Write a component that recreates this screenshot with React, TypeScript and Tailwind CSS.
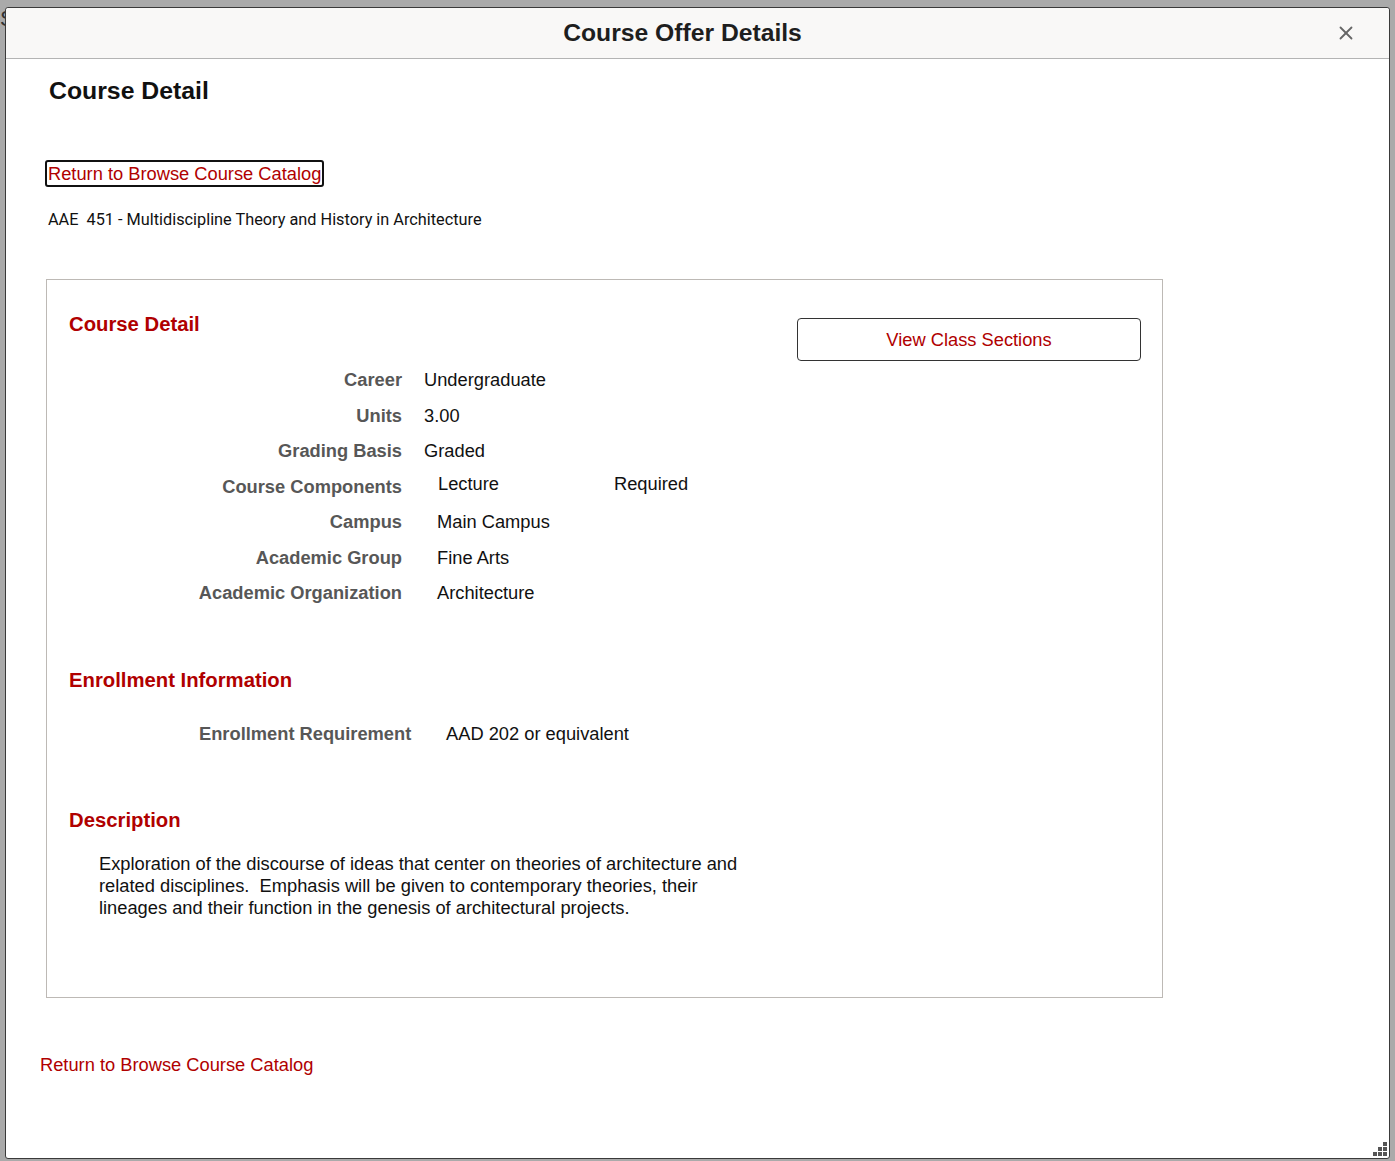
import { X } from "lucide-react"

const details = [
  { label: "Career", value: "Undergraduate" },
  { label: "Units", value: "3.00" },
  { label: "Grading Basis", value: "Graded" },
]

const details2 = [
  { label: "Campus", value: "Main Campus" },
  { label: "Academic Group", value: "Fine Arts" },
  { label: "Academic Organization", value: "Architecture" },
]

function Label({ children }: { children: React.ReactNode }) {
  return <div className="w-[356px] shrink-0 text-right font-bold text-[#575757]">{children}</div>
}

export default function App() {
  return (
    <div
      className="relative w-full h-[1161px] bg-[#aaaaaa] overflow-hidden pt-[7px] pl-[5px]"
      style={{ fontFamily: '"Liberation Sans", Arial, sans-serif' }}
    >
      <div className="absolute left-0 top-[8px] text-[22px] text-[#333] leading-none">S</div>

      <div className="relative w-[1385px] h-[1152px] bg-white border border-[#3a3a3a] rounded-[3px] flex flex-col">
        {/* header */}
        <div className="h-[51px] shrink-0 bg-[#f9f8f7] border-b border-[#b4b4b4] rounded-t-[3px] flex items-center justify-center pr-[30px] relative">
          <h1 className="text-[24.7px] font-bold text-[#1e1e1e]">Course Offer Details</h1>
          <button className="absolute right-[32px] top-[14px] text-[#666]">
            <X className="w-[22px] h-[22px]" strokeWidth={2} />
          </button>
        </div>

        <div className="flex-1 flex flex-col text-[18.3px]">
          <h2 className="pl-[43px] pt-[18px] text-[24.8px] font-bold text-[#111] leading-[28px]">Course Detail</h2>

          <div className="pl-[39px] pt-[55px]">
            <a className="inline-block text-[18.3px] text-[#b00000] leading-[21px] px-[1px] py-[1px] border-2 border-[#111] rounded-[3px]">
              Return to Browse Course Catalog
            </a>
          </div>

          <div className="pl-[42px] pt-[23px] text-[16.3px] text-[#111] leading-[20px]" style={{ fontFamily: "Roboto, Arial, sans-serif" }}>
            AAE&nbsp;&nbsp;451 - Multidiscipline Theory and History in Architecture
          </div>

          {/* main box */}
          <div className="ml-[40px] mt-[49px] w-[1117px] h-[719px] border border-[#bdb9b5] pl-[22px] pr-[21px] pt-[32px] text-[#111]">
            <div className="flex justify-between">
              <div className="flex-1">
                <h3 className="text-[20.3px] font-bold text-[#b00000] leading-[24px]">Course Detail</h3>

                <div className="mt-[26px] ml-[-23px] flex flex-col">
                  {details.map((d) => (
                    <div key={d.label} className="flex h-[35.5px] items-center">
                      <Label>{d.label}</Label>
                      <div className="pl-[22px]">{d.value}</div>
                    </div>
                  ))}
                  <div className="flex h-[35.5px] items-center">
                    <Label>Course Components</Label>
                    <div className="pl-[36px] w-[212px] -mt-[6px]">Lecture</div>
                    <div className="-mt-[6px]">Required</div>
                  </div>
                  {details2.map((d) => (
                    <div key={d.label} className="flex h-[35.5px] items-center">
                      <Label>{d.label}</Label>
                      <div className="pl-[35px]">{d.value}</div>
                    </div>
                  ))}
                </div>
              </div>

              <button className="mt-[6px] w-[344px] h-[43px] border border-[#333] rounded-[4px] text-[18.3px] text-[#b00000] shrink-0 pb-[1px]">
                View Class Sections
              </button>
            </div>

            <h3 className="mt-[57px] text-[20.3px] font-bold text-[#b00000] leading-[24px]">Enrollment Information</h3>
            <div className="mt-[28px] flex items-center">
              <div className="pl-[130px] w-[377px] font-bold text-[#575757]">Enrollment Requirement</div>
              <div>AAD 202 or equivalent</div>
            </div>

            <h3 className="mt-[61px] text-[20.3px] font-bold text-[#b00000] leading-[24px]">Description</h3>
            <p className="mt-[21px] pl-[30px] w-[690px] leading-[22px]">
              Exploration of the discourse of ideas that center on theories of architecture and related disciplines.&nbsp; Emphasis will be given to contemporary theories, their lineages and their function in the genesis of architectural projects.
            </p>
          </div>

          <div className="pl-[34px] pt-[53px]">
            <a className="text-[#b00000] leading-[21px]">Return to Browse Course Catalog</a>
          </div>
        </div>

        {/* resize grip */}
        <svg className="absolute right-[1px] bottom-[1px]" width="18" height="18" viewBox="0 0 18 18">
          <g fill="#555">
            <rect x="13" y="3" width="4" height="4" />
            <rect x="8" y="8" width="4" height="4" />
            <rect x="13" y="8" width="4" height="4" />
            <rect x="3" y="13" width="4" height="4" />
            <rect x="8" y="13" width="4" height="4" />
            <rect x="13" y="13" width="4" height="4" />
          </g>
        </svg>
      </div>
    </div>
  )
}
